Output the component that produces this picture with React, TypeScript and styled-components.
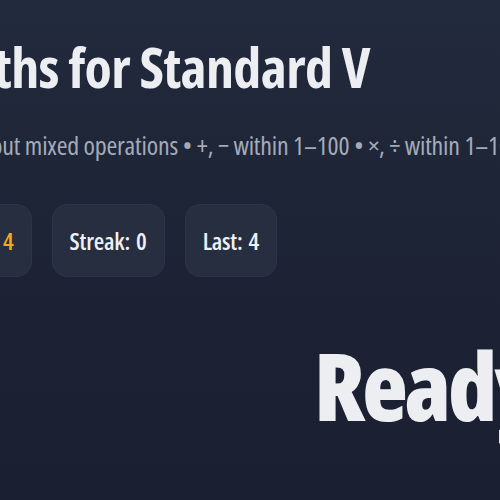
import React from 'react';
import styled, { createGlobalStyle } from 'styled-components';

const GlobalStyle = createGlobalStyle`
  html, body {
    margin: 0;
    padding: 0;
    height: 100%;
    background: #1c2234;
  }
  #root {
    min-height: 100%;
  }
`;

const Page = styled.div`
  width: 500px;
  height: 500px;
  overflow: hidden;
  background: linear-gradient(180deg, #222a3d 0%, #1d2435 45%, #1a1f31 100%);
  font-family: "Open Sans", "Noto Sans", sans-serif;
  font-stretch: condensed;
  color: #eef0f4;
`;

const Content = styled.main`
  margin-left: -74px;
  width: 900px;
  padding-top: 34px;
  display: flex;
  flex-direction: column;
`;

const Title = styled.h1`
  margin: 0;
  font-size: 56px;
  line-height: 64px;
  font-weight: 700;
  letter-spacing: -0.6px;
  color: #eceef2;
`;

const Subtitle = styled.p`
  margin: 30px 0 0;
  font-size: 26px;
  line-height: 34px;
  font-weight: 400;
  letter-spacing: -0.2px;
  color: #a4abba;
`;

const Stats = styled.div`
  display: flex;
  gap: 20px;
  margin-top: 42px;
`;

const Stat = styled.div`
  height: 73px;
  padding: 0 17px;
  display: flex;
  align-items: center;
  border-radius: 15px;
  background: #272e40;
  border: 1px solid #2d3447;
  box-sizing: border-box;
  font-size: 24px;
  font-weight: 600;
  letter-spacing: -0.2px;
  color: #eef0f4;
`;

const Value = styled.span<{ $accent?: boolean }>`
  margin-left: 6px;
  color: ${p => (p.$accent ? '#f2a81d' : 'inherit')};
`;

const Display = styled.section`
  padding-left: 388px;
  margin-top: 55px;
`;

const Big = styled.div`
  font-size: 94px;
  line-height: 106px;
  font-weight: 800;
  letter-spacing: -3px;
  color: #eceef2;
`;

export default function App() {
  return (
    <>
      <GlobalStyle />
      <Page>
        <Content>
          <Title>Maths for Standard V</Title>
          <Subtitle>
            Quiz about mixed operations • +, − within 1–100 • ×, ÷ within 1–10
          </Subtitle>
          <Stats>
            <Stat>
              Score:<Value $accent>4</Value>
            </Stat>
            <Stat>
              Streak:<Value>0</Value>
            </Stat>
            <Stat>
              Last:<Value>4</Value>
            </Stat>
          </Stats>
          <Display>
            <Big>Ready</Big>
          </Display>
        </Content>
      </Page>
    </>
  );
}
